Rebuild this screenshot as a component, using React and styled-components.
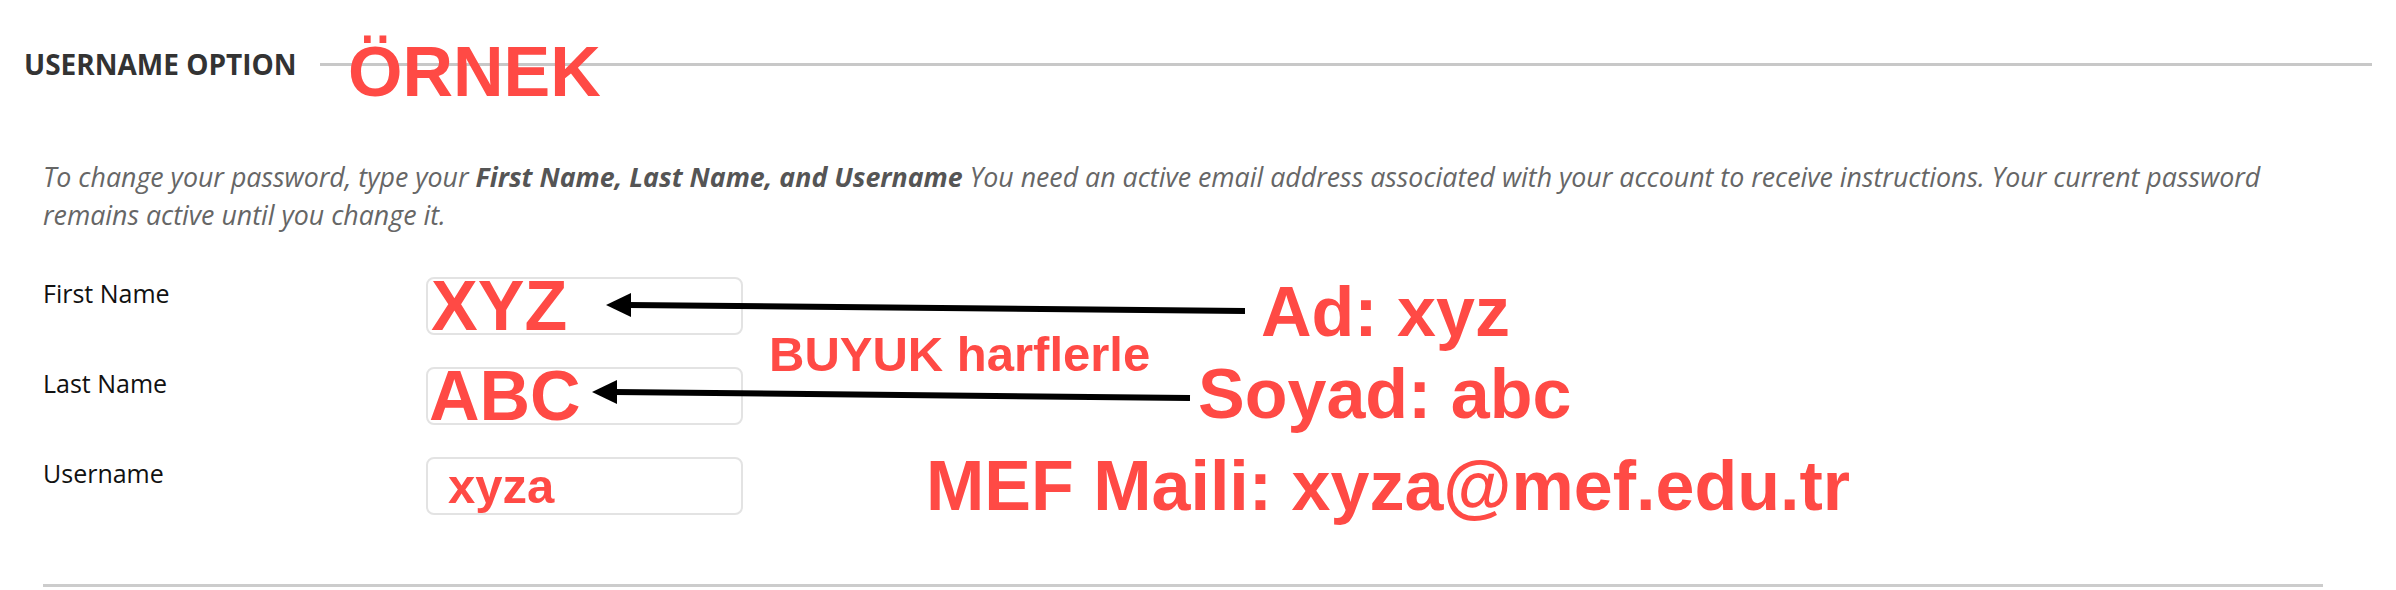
import React from 'react'
import styled, { createGlobalStyle } from 'styled-components'

const RED = '#ff4a45'

const GlobalStyle = createGlobalStyle`
  html, body {
    margin: 0;
    padding: 0;
    background: #fff;
  }
  body {
    font-family: "Open Sans", "Liberation Sans", sans-serif;
  }
`

const Page = styled.div`
  position: relative;
  width: 2396px;
  height: 590px;
  overflow: hidden;
  background: #fff;
`

const SectionHead = styled.div`
  display: flex;
  align-items: center;
  gap: 23px;
  padding: 46px 24px 0 24px;
  h2 {
    margin: 0;
    font: 700 28px/36px "Open Sans", sans-serif;
    color: #333;
    white-space: nowrap;
  }
`

const Rule = styled.div`
  flex: 1;
  height: 3px;
  background: #c8c8c8;
`

const Content = styled.div`
  padding: 0 73px 0 43px;
`

const Description = styled.p`
  margin: 76px 0 0;
  font: italic 400 26.75px/38px "Open Sans", sans-serif;
  color: #666;
  strong {
    font-weight: 700;
    color: #555;
  }
`

const Form = styled.div`
  margin-top: 43px;
  display: grid;
  grid-template-columns: 383px 317px;
  row-gap: 32px;
`

const Label = styled.label`
  font: 400 25px/32px "Open Sans", sans-serif;
  color: #111;
`

const Field = styled.div`
  box-sizing: border-box;
  height: 58px;
  border: 2px solid #e3e3e3;
  border-radius: 8px;
  display: flex;
  align-items: center;
  padding-left: ${p => p.$inset}px;
  font: 700 ${p => p.$size}px/1 "Liberation Sans", Arial, sans-serif;
  color: ${RED};
  white-space: nowrap;
  overflow: visible;
`

const Divider = styled.div`
  margin-top: 69px;
  height: 3px;
  background: #cccccc;
`

// hand-written annotations laid over the screenshot
const Note = styled.span`
  position: absolute;
  left: ${p => p.$x}px;
  top: ${p => p.$y}px;
  font: 700 ${p => p.$size}px/1 "Liberation Sans", Arial, sans-serif;
  color: ${RED};
  white-space: nowrap;
  z-index: 2;
`

const ArrowLayer = styled.svg`
  position: absolute;
  left: 0;
  top: 0;
  width: 2396px;
  height: 590px;
  pointer-events: none;
  z-index: 1;
`

const fields = [
  { label: 'First Name', value: 'XYZ', size: 70, inset: 3 },
  { label: 'Last Name', value: 'ABC', size: 70, inset: 1 },
  { label: 'Username', value: 'xyza', size: 49, inset: 20 },
]

function Arrow({ x1, y1, x2, y2 }) {
  // head points at (x2, y2), to the left
  return (
    <g>
      <line x1={x1} y1={y1} x2={x2 + 22} y2={y2} stroke="#000" strokeWidth="6" />
      <polygon points={`${x2},${y2} ${x2 + 25},${y2 - 12} ${x2 + 25},${y2 + 12}`} fill="#000" />
    </g>
  )
}

export default function App() {
  return (
    <Page>
      <GlobalStyle />
      <SectionHead>
        <h2>USERNAME OPTION</h2>
        <Rule />
      </SectionHead>
      <Content>
        <Description>
          To change your password, type your <strong>First Name, Last Name, and Username</strong> You need an active email address associated with your account to receive instructions. Your current password remains active until you change it.
        </Description>
        <Form>
          {fields.map(f => (
            <React.Fragment key={f.label}>
              <Label>{f.label}</Label>
              <Field $size={f.size} $inset={f.inset}>{f.value}</Field>
            </React.Fragment>
          ))}
        </Form>
        <Divider />
      </Content>

      <ArrowLayer viewBox="0 0 2396 590">
        <Arrow x1={1245} y1={311} x2={606} y2={305} />
        <Arrow x1={1190} y1={398} x2={592} y2={392} />
      </ArrowLayer>

      <Note $x={348} $y={37} $size={70}>ÖRNEK</Note>
      <Note $x={769} $y={330} $size={49}>BUYUK harflerle</Note>
      <Note $x={1261} $y={277} $size={70}>Ad: xyz</Note>
      <Note $x={1198} $y={359} $size={70}>Soyad: abc</Note>
      <Note $x={926} $y={451} $size={70}>MEF Maili: xyza@mef.edu.tr</Note>
    </Page>
  )
}
